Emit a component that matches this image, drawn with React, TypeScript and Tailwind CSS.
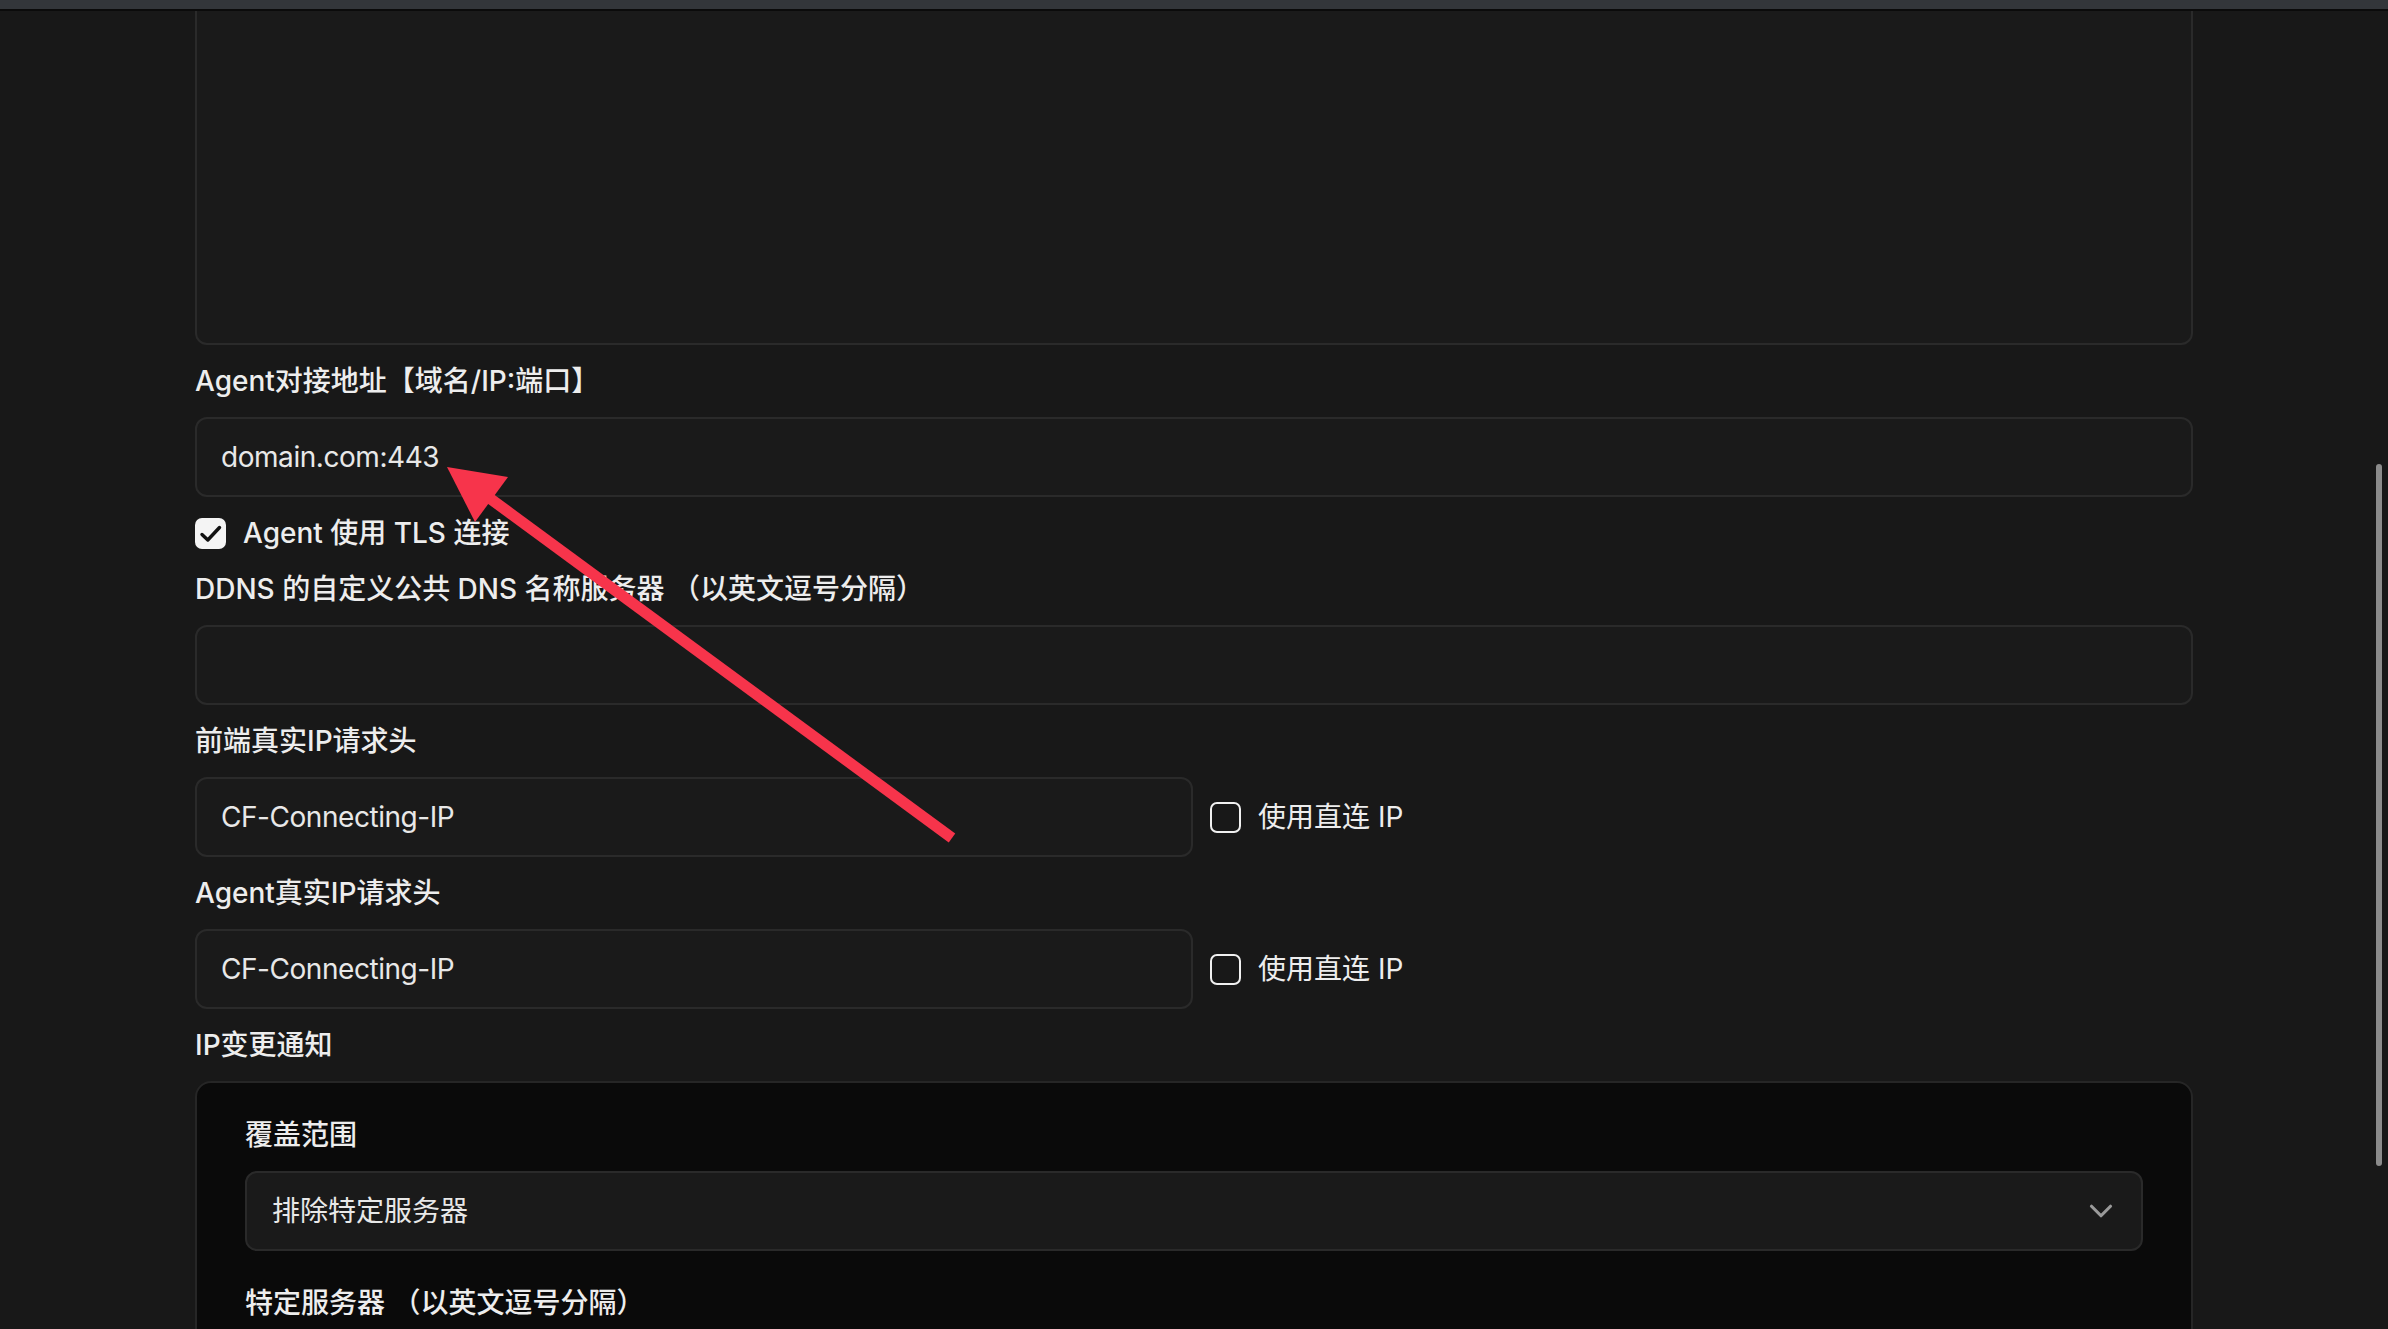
import { ChevronDown } from 'lucide-react'
import type { ReactNode } from 'react'

function Label({ children }: { children: ReactNode }) {
  return (
    <div className="h-[40px] leading-[40px] font-medium text-[#ededed]">
      {children}
    </div>
  )
}

function TextInput({ value, className = '' }: { value?: string; className?: string }) {
  return (
    <div
      className={`flex h-[80px] items-center rounded-[12px] border-2 border-[#2a2a2a] bg-[#1a1a1a] pl-[24px] tracking-[-0.45px] text-[#e8e8e8] ${className}`}
    >
      {value}
    </div>
  )
}

function Checkbox({ checked }: { checked?: boolean }) {
  if (checked) {
    return (
      <div className="flex h-[31px] w-[31px] shrink-0 items-center justify-center rounded-[7px] bg-[#f4f4f4]">
        <svg width="31" height="31" viewBox="0 0 31 31" fill="none">
          <path
            d="M7 16.5 12.8 22 24.5 9.5"
            stroke="#111"
            strokeWidth="3.4"
            strokeLinecap="round"
            strokeLinejoin="round"
          />
        </svg>
      </div>
    )
  }
  return <div className="h-[31px] w-[31px] shrink-0 rounded-[7px] border-2 border-[#f0f0f0]" />
}

function HeaderRow({ value }: { value: string }) {
  return (
    <div className="flex items-center">
      <TextInput value={value} className="w-[998px]" />
      <div className="ml-[17px] flex items-center gap-[17px] text-[#ededed]">
        <Checkbox />
        <span>使用直连 IP</span>
      </div>
    </div>
  )
}

export default function App() {
  return (
    <div className="relative h-[1329px] w-[2388px] overflow-hidden bg-[#181818] font-[family-name:Inter,'Noto_Sans_CJK_SC',sans-serif] text-[28px] text-[#ededed]">
      <div className="relative z-10 h-[9px] bg-[#33363a]" />
      <div className="relative z-10 h-[2px] bg-[#0b0b0b]" />

      <div className="mx-auto flex w-[1998px] flex-col gap-[16px]">
        {/* textarea, top scrolled out of view */}
        <div className="-mt-[28px] h-[362px] rounded-[12px] border-2 border-[#2a2a2a] bg-[#1a1a1a]" />

        <Label>Agent对接地址【域名/IP:端口】</Label>
        <TextInput value="domain.com:443" />

        <div className="flex h-[40px] items-center gap-[17px]">
          <Checkbox checked />
          <span className="font-medium">Agent 使用 TLS 连接</span>
        </div>

        <Label>DDNS 的自定义公共 DNS 名称服务器 （以英文逗号分隔）</Label>
        <TextInput />

        <Label>前端真实IP请求头</Label>
        <HeaderRow value="CF-Connecting-IP" />

        <Label>Agent真实IP请求头</Label>
        <HeaderRow value="CF-Connecting-IP" />

        <Label>IP变更通知</Label>
        <div className="rounded-[16px] border-2 border-[#262626] bg-[#0a0a0a] px-[48px] pt-[32px] pb-[48px]">
          <div className="flex flex-col gap-[16px]">
            <Label>覆盖范围</Label>
            <div className="flex h-[80px] items-center justify-between rounded-[12px] border-2 border-[#2a2a2a] bg-[#1a1a1a] pl-[25px] pr-[21px] text-[#e8e8e8]">
              <span>排除特定服务器</span>
              <ChevronDown size={38} strokeWidth={2} className="text-[#9a9a9a]" />
            </div>
          </div>
          <div className="mt-[32px] flex flex-col gap-[16px]">
            <Label>特定服务器 （以英文逗号分隔）</Label>
            <TextInput />
          </div>
        </div>
      </div>

      {/* overlay scrollbar */}
      <div className="absolute left-[2376px] top-[464px] h-[702px] w-[6px] rounded-full bg-[#8b8b8b]" />

      {/* annotation arrow */}
      <svg
        className="pointer-events-none absolute left-0 top-0"
        width="2388"
        height="1329"
        viewBox="0 0 2388 1329"
      >
        <line x1="952" y1="838" x2="488" y2="497" stroke="#f7344b" strokeWidth="11" />
        <polygon points="447,467 508,477 475,522" fill="#f7344b" />
      </svg>
    </div>
  )
}
